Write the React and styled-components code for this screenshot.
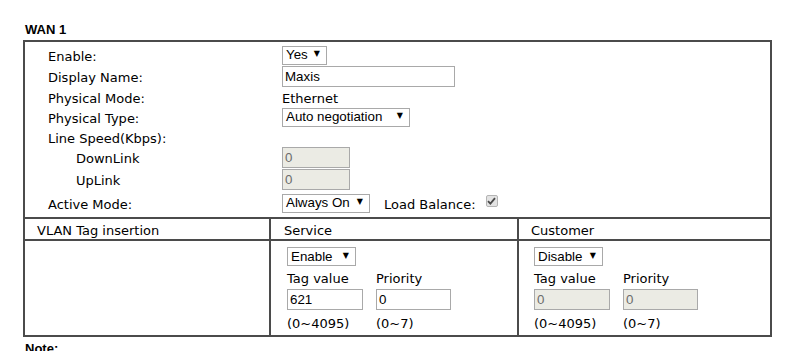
import React from "react";
import styled, { createGlobalStyle } from "styled-components";

const GlobalStyle = createGlobalStyle`
  html, body {
    margin: 0;
    padding: 0;
    background: #fff;
  }
  body {
    font-family: "DejaVu Sans", Verdana, sans-serif;
    font-size: 13px;
    color: #000;
  }
`;

const Page = styled.div`
  padding: 22px 0 0 23px;
`;

const Heading = styled.div`
  font-family: "Liberation Sans", Arial, sans-serif;
  font-weight: bold;
  font-size: 13px;
  line-height: 15px;
  padding-left: 2px;
  margin-bottom: 3px;
`;

const Box = styled.div`
  width: 745px;
  border: 2px solid #4b4b4b;
`;

const FormGrid = styled.div`
  display: grid;
  grid-template-columns: 234px 1fr;
  grid-template-rows: 22px 21px 20px 20px 20px 21px 23px 24px;
  padding: 2px 0 2px 23px;
  align-items: center;
`;

const Label = styled.div`
  padding-left: ${(p) => (p.indent ? "28px" : "0")};
  padding-top: 3px;
  line-height: 16px;
  white-space: nowrap;
`;

const Cell = styled.div`
  display: flex;
  align-items: center;
  line-height: 16px;
  padding-top: ${(p) => (p.text ? 3 : 0)}px;
`;

const SelectBox = styled.div`
  box-sizing: border-box;
  width: ${(p) => p.w}px;
  height: 19px;
  border: 1px solid #a9a9a9;
  background: #fff;
  display: flex;
  align-items: center;
  justify-content: space-between;
  padding: 0 6px 0 3px;
  font-family: "Liberation Sans", Arial, sans-serif;
  font-size: 13.33px;
  color: #000;
`;

const Arrow = styled.span`
  font-family: "DejaVu Sans", sans-serif;
  font-size: 8px;
  line-height: 1;
  margin-top: -2px;
`;

const TextInput = styled.div`
  box-sizing: border-box;
  width: ${(p) => p.w}px;
  height: 21px;
  border: 1px solid #a9a9a9;
  background: ${(p) => (p.disabled ? "#ebebe4" : "#fff")};
  color: ${(p) => (p.disabled ? "#6d6d6d" : "#000")};
  display: flex;
  align-items: center;
  padding-left: 2px;
  font-family: "Liberation Sans", Arial, sans-serif;
  font-size: 13.33px;
`;

const InlineLabel = styled.span`
  margin-left: 14px;
  padding-top: 3px;
`;

const Check = styled.span`
  box-sizing: border-box;
  width: 12px;
  height: 12px;
  margin-left: 10px;
  border: 1px solid #b4b4b4;
  border-radius: 2px;
  background: #e3e3e3;
  display: inline-flex;
  align-items: center;
  justify-content: center;
  margin-top: -4px;
`;

const VlanGrid = styled.div`
  display: grid;
  grid-template-columns: 244px 248px 253px;
  border-top: 2px solid #4b4b4b;
`;

const HeadCell = styled.div`
  height: 20px;
  line-height: 23px;
  padding-left: ${(p) => p.pad}px;
  border-left: ${(p) => (p.first ? "none" : "2px solid #4b4b4b")};
  border-bottom: 2px solid #4b4b4b;
`;

const BodyCell = styled.div`
  height: 94px;
  padding: 6px 0 0 ${(p) => p.pad}px;
  box-sizing: border-box;
  border-left: ${(p) => (p.first ? "none" : "2px solid #4b4b4b")};
`;

const TagRow = styled.div`
  display: flex;
  gap: 14px;
  margin-top: 3px;
`;

const TagCol = styled.div`
  display: flex;
  flex-direction: column;
  width: ${(p) => p.w}px;
  line-height: 20px;
`;

const Range = styled.div`
  margin-top: 6px;
  line-height: 16px;
`;

const Note = styled.div`
  font-family: "Liberation Sans", Arial, sans-serif;
  font-weight: bold;
  font-size: 13px;
  line-height: 15px;
  margin-top: 4px;
  padding-left: 2px;
`;

const Select = ({ w, value }) => (
  <SelectBox w={w}>
    <span>{value}</span>
    <Arrow>▼</Arrow>
  </SelectBox>
);

const TagFields = ({ disabled }) => (
  <TagRow>
    <TagCol w={75}>
      <span>Tag value</span>
      <TextInput w={76} disabled={disabled}>{disabled ? "0" : "621"}</TextInput>
      <Range>(0~4095)</Range>
    </TagCol>
    <TagCol w={75}>
      <span>Priority</span>
      <TextInput w={75} disabled={disabled}>0</TextInput>
      <Range>(0~7)</Range>
    </TagCol>
  </TagRow>
);

export default function App() {
  return (
    <>
      <GlobalStyle />
      <Page>
        <Heading>WAN 1</Heading>
        <Box>
          <FormGrid>
            <Label>Enable:</Label>
            <Cell><Select w={45} value="Yes" /></Cell>
            <Label>Display Name:</Label>
            <Cell><TextInput w={173}>Maxis</TextInput></Cell>
            <Label>Physical Mode:</Label>
            <Cell text>Ethernet</Cell>
            <Label>Physical Type:</Label>
            <Cell><Select w={128} value="Auto negotiation" /></Cell>
            <Label>Line Speed(Kbps):</Label>
            <Cell />
            <Label indent>DownLink</Label>
            <Cell><TextInput w={68} disabled>0</TextInput></Cell>
            <Label indent>UpLink</Label>
            <Cell><TextInput w={68} disabled>0</TextInput></Cell>
            <Label>Active Mode:</Label>
            <Cell>
              <Select w={88} value="Always On" />
              <InlineLabel>Load Balance:</InlineLabel>
              <Check>
                <svg width="9" height="8" viewBox="0 0 9 8">
                  <path d="M1 4.2 L3.4 6.6 L8 1.2" fill="none" stroke="#4a4a4a" strokeWidth="1.8" />
                </svg>
              </Check>
            </Cell>
          </FormGrid>
          <VlanGrid>
            <HeadCell first pad={12}>VLAN Tag insertion</HeadCell>
            <HeadCell pad={13}>Service</HeadCell>
            <HeadCell pad={12}>Customer</HeadCell>
            <BodyCell first pad={0} />
            <BodyCell pad={16}>
              <Select w={69} value="Enable" />
              <TagFields />
            </BodyCell>
            <BodyCell pad={15}>
              <Select w={69} value="Disable" />
              <TagFields disabled />
            </BodyCell>
          </VlanGrid>
        </Box>
        <Note>Note:</Note>
      </Page>
    </>
  );
}
